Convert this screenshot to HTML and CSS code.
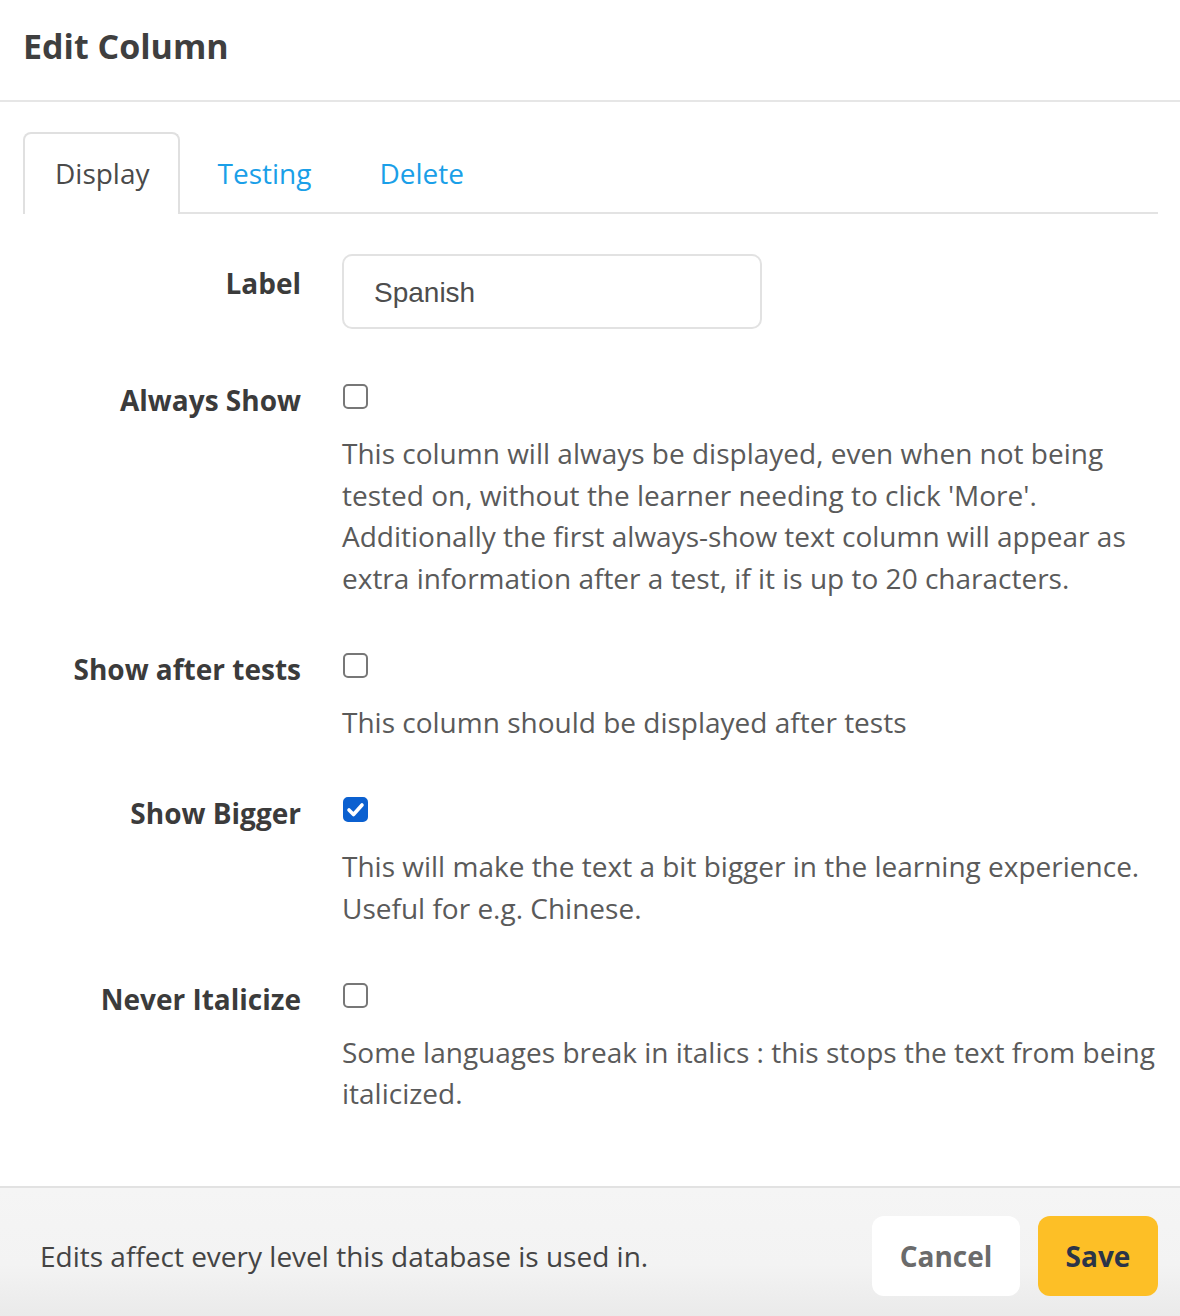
FILE: index.html
```html
<!DOCTYPE html>
<html lang="en">
<head>
<meta charset="utf-8">
<title>Edit Column</title>
<link rel="stylesheet" href="styles.css">
</head>
<body>
<div class="modal">
  <header class="modal-header">
    <h1 class="modal-title">Edit Column</h1>
  </header>
  <div class="modal-body">
    <nav class="tabs">
      <span class="tab active">Display</span>
      <span class="tab">Testing</span>
      <span class="tab">Delete</span>
    </nav>
    <div class="form">
      <div class="row row-label">
        <div class="label label-input">Label</div>
        <div class="control">
          <div class="input">Spanish</div>
        </div>
      </div>
      <div class="row">
        <div class="label">Always Show</div>
        <div class="control">
          <span class="checkbox"></span>
          <p class="desc">This column will always be displayed, even when not being tested on, without the learner needing to click 'More'. Additionally the first always-show text column will appear as extra information after a test, if it is up to 20 characters.</p>
        </div>
      </div>
      <div class="row">
        <div class="label">Show after tests</div>
        <div class="control">
          <span class="checkbox"></span>
          <p class="desc">This column should be displayed after tests</p>
        </div>
      </div>
      <div class="row">
        <div class="label">Show Bigger</div>
        <div class="control">
          <span class="checkbox checked"><svg viewBox="0 0 25 25" width="25" height="25"><path d="M6 13 L10.5 17.5 L19 8" fill="none" stroke="#fff" stroke-width="3.6" stroke-linecap="round" stroke-linejoin="round"/></svg></span>
          <p class="desc">This will make the text a bit bigger in the learning experience. Useful for e.g. Chinese.</p>
        </div>
      </div>
      <div class="row">
        <div class="label">Never Italicize</div>
        <div class="control">
          <span class="checkbox"></span>
          <p class="desc">Some languages break in italics : this stops the text from being italicized.</p>
        </div>
      </div>
    </div>
  </div>
  <footer class="modal-footer">
    <p class="footer-note">Edits affect every level this database is used in.</p>
    <div class="buttons">
      <span class="btn btn-cancel">Cancel</span>
      <span class="btn btn-save">Save</span>
    </div>
  </footer>
</div>
</body>
</html>
```

FILE: styles.css
```css
* { box-sizing: border-box; }
html, body { margin: 0; padding: 0; background: #fff; }
body {
  font-family: "Open Sans", "Noto Sans", sans-serif;
  width: 1180px;
  height: 1316px;
  overflow: hidden;
}
.modal {
  display: flex;
  flex-direction: column;
  height: 1316px;
}
.modal-header {
  height: 102px;
  border-bottom: 2px solid #e6e6e6;
  padding: 0 23px;
  display: flex;
  align-items: center;
}
.modal-title {
  margin: 0;
  margin-top: -9px;
  font-size: 34px;
  font-weight: 700;
  color: #3f3f3f;
}
.modal-body {
  flex: 1;
  padding: 30px 22px 0 23px;
}
.tabs {
  display: flex;
  border-bottom: 2px solid #e3e3e3;
  height: 82px;
}
.tab {
  display: flex;
  align-items: center;
  padding: 0 28px 2px 30px;
  margin-right: 6px;
  font-size: 28px;
  color: #1a9fe8;
  border: 2px solid transparent;
  border-bottom: none;
  border-radius: 8px 8px 0 0;
  margin-bottom: -2px;
}
.tab.active {
  color: #4a4a4a;
  border-color: #e0e0e0;
  background: #fff;
}
.form {
  padding-top: 40px;
}
.row {
  display: grid;
  grid-template-columns: 278px 1fr;
  column-gap: 41px;
  margin-bottom: 53.33px;
}
.row-label { margin-bottom: 55px; }
.label {
  text-align: right;
  font-size: 28px;
  font-weight: 700;
  color: #3b3b3b;
  line-height: 30px;
  padding-top: 1px;
  white-space: nowrap;
}
.label-input { padding-top: 14px; }
.control { min-width: 0; }
.input {
  width: 420px;
  height: 75px;
  border: 2px solid #e2e2e2;
  border-radius: 10px;
  padding: 2px 30px 0;
  display: flex;
  align-items: center;
  font-family: "Liberation Sans", Arial, sans-serif;
  font-size: 28px;
  color: #4d4d4d;
}
.checkbox {
  display: block;
  width: 25px;
  height: 25px;
  margin: 0 0 1px 1px;
  border: 2px solid #777;
  border-radius: 5px;
}
.checkbox.checked {
  background: #0b60d0;
  border-color: #0b60d0;
  position: relative;
}
.checkbox.checked svg {
  position: absolute;
  left: -2px;
  top: -2px;
}
.desc {
  margin: 24px 0 0;
  font-size: 28px;
  line-height: 41.67px;
  color: #5a5a5a;
}
.modal-footer {
  height: 130px;
  border-top: 2px solid #e2e2e2;
  background: linear-gradient(#f5f5f5, #f3f3f3 60%, #eaeaea);
  display: flex;
  align-items: center;
  justify-content: space-between;
  padding: 8px 22px 0 40px;
}
.footer-note {
  margin: 0;
  font-size: 28px;
  color: #444;
  white-space: nowrap;
}
.buttons {
  display: flex;
  gap: 18px;
}
.btn {
  height: 80px;
  display: flex;
  align-items: center;
  justify-content: center;
  border-radius: 12px;
  font-size: 28px;
  font-weight: 700;
}
.btn-cancel {
  width: 148px;
  background: #fff;
  color: #6b6b6b;
}
.btn-save {
  width: 120px;
  background: #fdbf26;
  color: #2b3448;
}
```
